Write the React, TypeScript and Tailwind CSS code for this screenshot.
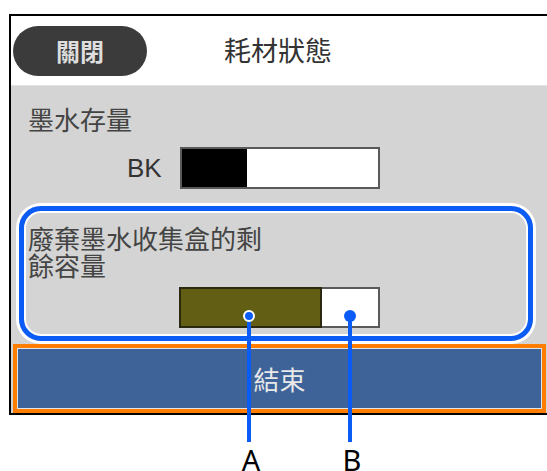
import React from "react";

const cjk = "font-['Noto_Sans_CJK_TC','Noto_Sans_CJK_SC',sans-serif]";

function Callout({ x, label, ring }: { x: number; label: string; ring: boolean }) {
  return (
    <>
      <div className="absolute w-[4px] bg-[#0a5cf5]" style={{ left: x - 2, top: 316, height: 126 }} />
      <div
        className={`absolute h-[12px] w-[12px] rounded-full bg-[#0a5cf5] ${ring ? "border-2 border-white" : ""}`}
        style={{ left: x - 6, top: 310 }}
      />
      <div
        className="absolute w-[30px] text-center font-['Noto_Sans',sans-serif] text-[29px] leading-[29px] text-black"
        style={{ left: x - 13, top: 445 }}
      >
        {label}
      </div>
    </>
  );
}

export default function App() {
  return (
    <div className="relative h-[471px] w-[547px] overflow-hidden bg-white">
      <div className="ml-[9px] mt-[14px] w-[541px] border-2 border-black bg-[#d3d4d3]">
        {/* header */}
        <div className="flex h-[70px] items-center border-b border-[#e2e2e2] bg-white">
          <div
            className={`ml-[2px] flex h-[50px] w-[134px] items-center justify-center rounded-full bg-[#3b3b3b] ${cjk} text-[24px] font-bold text-[#dedede]`}
          >
            關閉
          </div>
          <div className={`ml-[77px] ${cjk} text-[27px] text-[#333]`}>耗材狀態</div>
        </div>

        {/* body */}
        <div className="pt-[20px] pb-[3px]">
          <div className={`pl-[17px] ${cjk} text-[26px] leading-[26px] text-[#444]`}>墨水存量</div>
          <div className="mt-[15px] flex items-center pl-[116px]">
            <div className="w-[53px] font-['Liberation_Sans',sans-serif] text-[26px] text-[#333]">BK</div>
            <div className="flex h-[42px] w-[200px] border-2 border-[#5a5a5a] bg-white">
              <div className="h-full w-[65px] bg-black" />
            </div>
          </div>

          <div className="ml-[8px] mt-[17px] h-[135px] w-[514px] rounded-[22px] border-[5px] border-[#0a5cf5] pl-[4px] pt-[13px] shadow-[0_0_0_3px_white,inset_0_0_0_2px_white]">
            <div className={`${cjk} text-[26px] leading-[27px] text-[#444]`}>
              <div>廢棄墨水收集盒的剩</div>
              <div>餘容量</div>
            </div>
            <div className="ml-[151px] mt-[9px] flex h-[41px] w-[201px] border-2 border-[#5a5a5a] bg-white">
              <div className="-my-[2px] -ml-[2px] h-[41px] w-[143px] border-2 border-[#2b2910] bg-[#625f15]" />
            </div>
          </div>
        </div>

        {/* end button */}
        <div className="px-[2px]">
          <div className="h-[69px] border-4 border-[#ff7d00] bg-[#dfe3ea] p-[1px]">
            <div className={`flex h-full items-center justify-center bg-[#3e6399] ${cjk} text-[26px] text-[#e8e8e8]`}>
              結束
            </div>
          </div>
        </div>
      </div>

      <Callout x={249} label="A" ring />
      <Callout x={350} label="B" ring={false} />
    </div>
  );
}
